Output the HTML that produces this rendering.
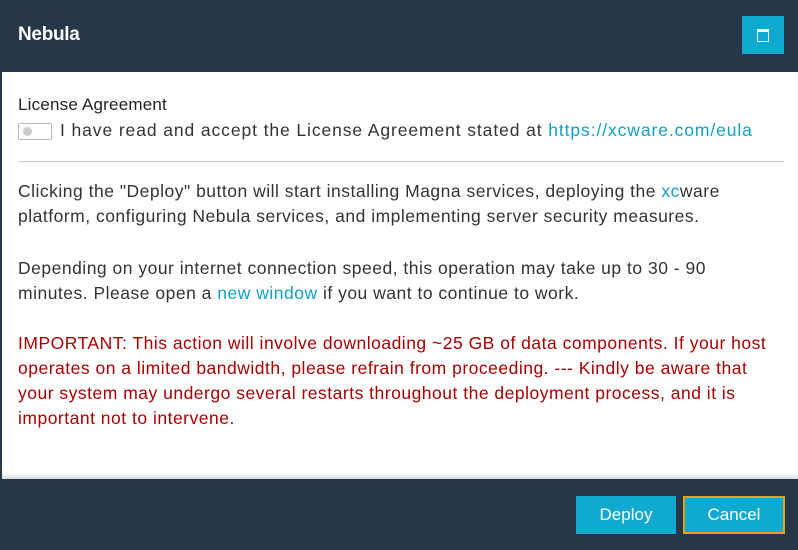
<!DOCTYPE html>
<html><head><style>
*{margin:0;padding:0;box-sizing:border-box}
body{width:798px;height:550px;background:#253748;font-family:"Liberation Sans",sans-serif;position:relative;overflow:hidden}
.hdr{position:absolute;left:0;top:0;width:798px;height:70px;background:#253748}
.hdr h1{position:absolute;left:18px;top:24px;font-size:19px;color:#fff;font-weight:bold;letter-spacing:-0.3px}
.ib{position:absolute;left:742px;top:16px;width:42px;height:38px;background:#10a9cf}
.ib i{position:absolute;left:15px;top:13px;width:12px;height:13px;border:1.5px solid #fff;border-top-width:3px}
.main{position:absolute;left:2px;top:72px;width:796px;height:407px;background:#fff;box-shadow:inset 0 -6px 6px -4px #ccc}
.t{position:absolute;left:18px;white-space:nowrap;font-size:17.5px;color:#333;letter-spacing:0.5px}
.r{color:#a00}
a{color:#10a0c8;text-decoration:none}
.tog{position:absolute;left:18px;top:123px;width:34px;height:17px;border:1px solid #bbb;border-radius:2px}
.tog i{position:absolute;left:4px;top:3px;width:9px;height:9px;border-radius:50%;background:#ccc}
.hr{position:absolute;left:18px;top:161px;width:766px;height:1px;background:#ccc}
.btn{position:absolute;top:496px;height:38px;background:#10a9cf;color:#fff;font-size:17px;text-align:center;line-height:38px}
</style></head><body>
<div class="hdr"><h1>Nebula</h1><div class="ib"><i></i></div></div>
<div class="main"></div>
<div class="t" style="top:95px;font-size:17px;letter-spacing:0.2px;color:#222">License Agreement</div>
<div class="tog"><i></i></div>
<div class="t" style="left:60px;top:120px;letter-spacing:0.9px">I have read and accept the License Agreement stated at <a>https://xcware.com/eula</a></div>
<div class="hr"></div>
<div class="t" style="top:181px">Clicking the "Deploy" button will start installing Magna services, deploying the <a>xc</a>ware</div>
<div class="t" style="top:206px">platform, configuring Nebula services, and implementing server security measures.</div>
<div class="t" style="top:258px">Depending on your internet connection speed, this operation may take up to 30 - 90</div>
<div class="t" style="top:283px">minutes. Please open a <a>new window</a> if you want to continue to work.</div>
<div class="t r" style="top:333px">IMPORTANT: This action will involve downloading ~25 GB of data components. If your host</div>
<div class="t r" style="top:358px">operates on a limited bandwidth, please refrain from proceeding. --- Kindly be aware that</div>
<div class="t r" style="top:383px">your system may undergo several restarts throughout the deployment process, and it is</div>
<div class="t r" style="top:408px">important not to intervene.</div>
<div class="btn" style="left:576px;width:100px">Deploy</div>
<div class="btn" style="left:683px;width:102px;border:2px solid #e8a317;line-height:34px">Cancel</div>
</body></html>
